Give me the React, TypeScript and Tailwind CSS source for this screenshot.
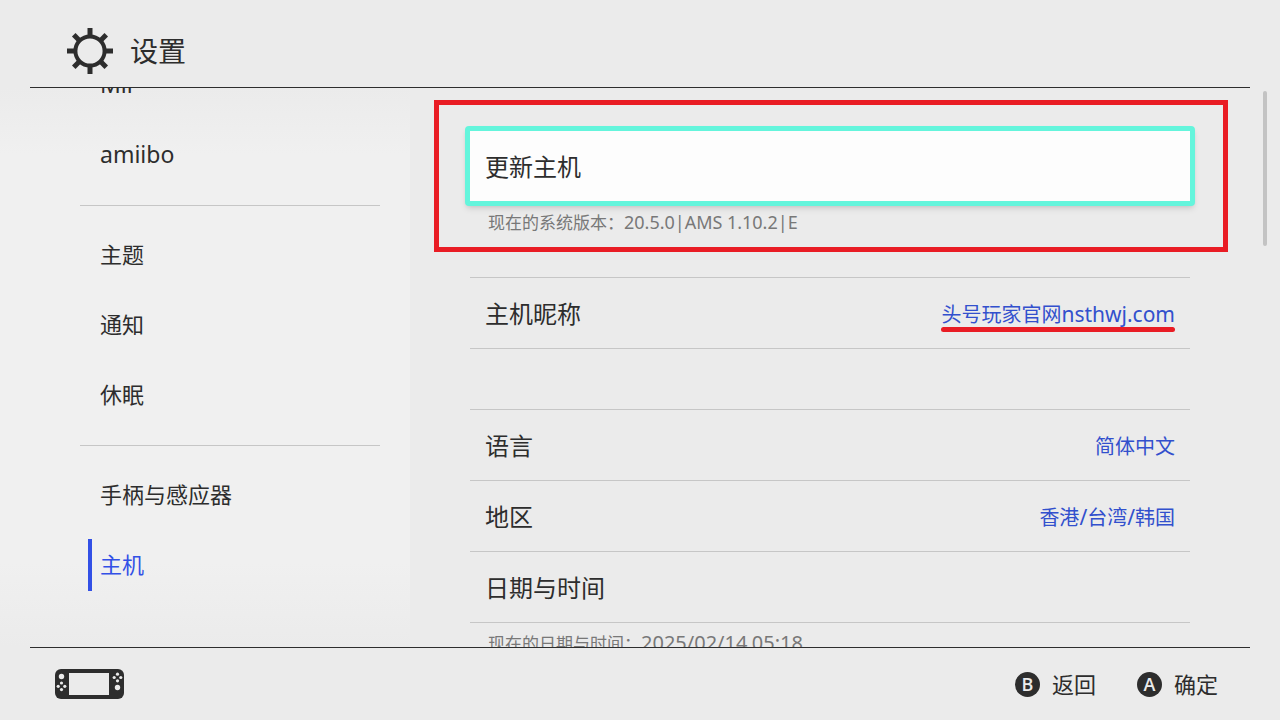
import React from 'react';

const menuGroups = [
  ['Mii', 'amiibo'],
  ['主题', '通知', '休眠'],
  ['手柄与感应器', '主机'],
];

const regionRows = [
  { label: '语言', value: '简体中文' },
  { label: '地区', value: '香港/台湾/韩国' },
  { label: '日期与时间' },
];

interface MixedTextProps {
  text: string;
  latinClass: string;
}

// Latin letters and digits are set a little larger than the Chinese around them
const MixedText: React.FC<MixedTextProps> = ({ text, latinClass }) => (
  <>
    {text.split(/([A-Za-z0-9.:/|]+)/).map((part, i) =>
      i % 2 === 1 ? <span key={i} className={latinClass}>{part}</span> : part
    )}
  </>
);

const GearIcon = () => (
  <svg width="48" height="48" viewBox="0 0 48 48" fill="none" stroke="#2d2d2d" aria-hidden="true">
    <circle cx="24" cy="24" r="14.6" strokeWidth="4" />
    {[0, 45, 90, 135, 180, 225, 270, 315].map((angle) => (
      <path key={angle} d="M24 9V1" strokeWidth="5" transform={`rotate(${angle} 24 24)`} />
    ))}
  </svg>
);

const ConsoleIcon = () => (
  <svg width="70" height="30" viewBox="0 0 70 30" aria-hidden="true">
    <rect x="0" y="0" width="69" height="30" rx="6" fill="#2d2d2d" />
    <rect x="14" y="4" width="40" height="22" fill="#ebebeb" />
    <g fill="#ebebeb">
      <circle cx="6.5" cy="7.5" r="2.7" />
      <circle cx="6.5" cy="14" r="1.6" />
      <circle cx="6.5" cy="20.6" r="1.6" />
      <circle cx="3.2" cy="17.3" r="1.6" />
      <circle cx="9.8" cy="17.3" r="1.6" />
      <circle cx="62.5" cy="5.2" r="1.6" />
      <circle cx="62.5" cy="11.8" r="1.6" />
      <circle cx="59.2" cy="8.5" r="1.6" />
      <circle cx="65.8" cy="8.5" r="1.6" />
      <circle cx="62.5" cy="18.5" r="2.7" />
    </g>
  </svg>
);

interface HintProps {
  button: string;
  label: string;
}

const Hint: React.FC<HintProps> = ({ button, label }) => (
  <button className="flex items-center gap-3">
    <span className="flex h-[25px] w-[25px] items-center justify-center rounded-full bg-[#2d2d2d] font-['Open_Sans',sans-serif] text-lg font-semibold text-[#ebebeb]">
      {button}
    </span>
    <span className="text-[22px]">{label}</span>
  </button>
);

interface SettingRowProps {
  label: string;
  value?: string;
  marked?: boolean;
}

const SettingRow: React.FC<SettingRowProps> = ({ label, value, marked }) => (
  <li className="border-b border-[#c6c6c6]">
    <button className="flex h-[70px] w-full items-center justify-between px-[15px] pt-0.5">
      <span className="text-2xl">{label}</span>
      {value && (
        <span className="relative pt-0.5 text-xl text-[#3250cd]">
          <MixedText text={value} latinClass="text-[21px]" />
          {marked && <span className="absolute inset-x-0 -bottom-0.5 h-[5px] rounded-full bg-[#e91c24]" />}
        </span>
      )}
    </button>
  </li>
);

export default function App() {
  return (
    <div className="flex h-screen flex-col overflow-hidden bg-[#ebebeb] font-['Noto_Sans','Noto_Sans_CJK_SC',sans-serif] text-[#2d2d2d]">
      <header className="mx-[30px] flex h-22 shrink-0 items-center gap-4 border-b border-[#2d2d2d] pt-[18px] pb-1 pl-9">
        <GearIcon />
        <h1 className="text-[28px]">设置</h1>
      </header>

      <main className="flex min-h-0 flex-1">
        <nav className="w-[410px] shrink-0 overflow-hidden bg-[linear-gradient(to_bottom,#ebebeb,#f0f0f0_12%,#f0f0f0_85%,#ebebeb)]">
          <div className="-mt-[38px] flex flex-col pr-[30px] pl-20">
            {menuGroups.map((group, i) => (
              <React.Fragment key={i}>
                {i > 0 && (
                  <div className="flex h-[30px] items-center">
                    <hr className="w-full border-[#c6c6c6]" />
                  </div>
                )}
                {group.map((item) => {
                  const active = item === '主机';
                  return (
                    <button key={item} className="flex h-[70px] items-center pl-2 text-[22px]">
                      <span
                        className={`flex h-[52px] items-center border-l-4 pb-0.5 pl-2 ${active ? 'border-[#3250e6] text-[#3250e6]' : 'border-transparent'}`}
                      >
                        <MixedText text={item} latinClass="text-[23px]" />
                      </span>
                    </button>
                  );
                })}
              </React.Fragment>
            ))}
          </div>
        </nav>

        <section className="relative min-w-0 flex-1 overflow-hidden pt-[38px] pr-[90px] pl-[60px]">
          <div className="relative">
            <button className="-mx-[5px] flex h-20 w-[calc(100%+10px)] items-center rounded-sm border-5 border-[#64f5dc] bg-[#fdfdfd] px-[15px] pt-0.5 text-2xl shadow-md">
              更新主机
            </button>
            <p className="pl-[18px] text-[17px] leading-[34px] text-[#787878]">
              <MixedText text="现在的系统版本：20.5.0|AMS 1.10.2|E" latinClass="text-lg" />
            </p>
            <div className="pointer-events-none absolute -top-[26px] -right-[38px] -bottom-3 -left-9 border-5 border-[#e91c24]" />
          </div>

          <ul className="mt-[37px] border-t border-[#c6c6c6]">
            <SettingRow label="主机昵称" value="头号玩家官网nsthwj.com" marked />
          </ul>

          <ul className="mt-15 border-t border-[#c6c6c6]">
            {regionRows.map((row) => (
              <SettingRow key={row.label} label={row.label} value={row.value} />
            ))}
          </ul>
          <p className="mt-1 pl-[18px] text-[17px] leading-[34px] text-[#787878]">
            <MixedText text="现在的日期与时间：2025/02/14 05:18" latinClass="text-xl" />
          </p>

          <div className="absolute top-[3px] right-[13px] h-[155px] w-1 rounded-full bg-[#c3c3c3]" />
        </section>
      </main>

      <footer className="mx-[30px] flex h-[73px] shrink-0 items-center justify-between border-t border-[#2d2d2d] pr-8 pl-[25px]">
        <ConsoleIcon />
        <div className="flex gap-[41px]">
          <Hint button="B" label="返回" />
          <Hint button="A" label="确定" />
        </div>
      </footer>
    </div>
  );
}
